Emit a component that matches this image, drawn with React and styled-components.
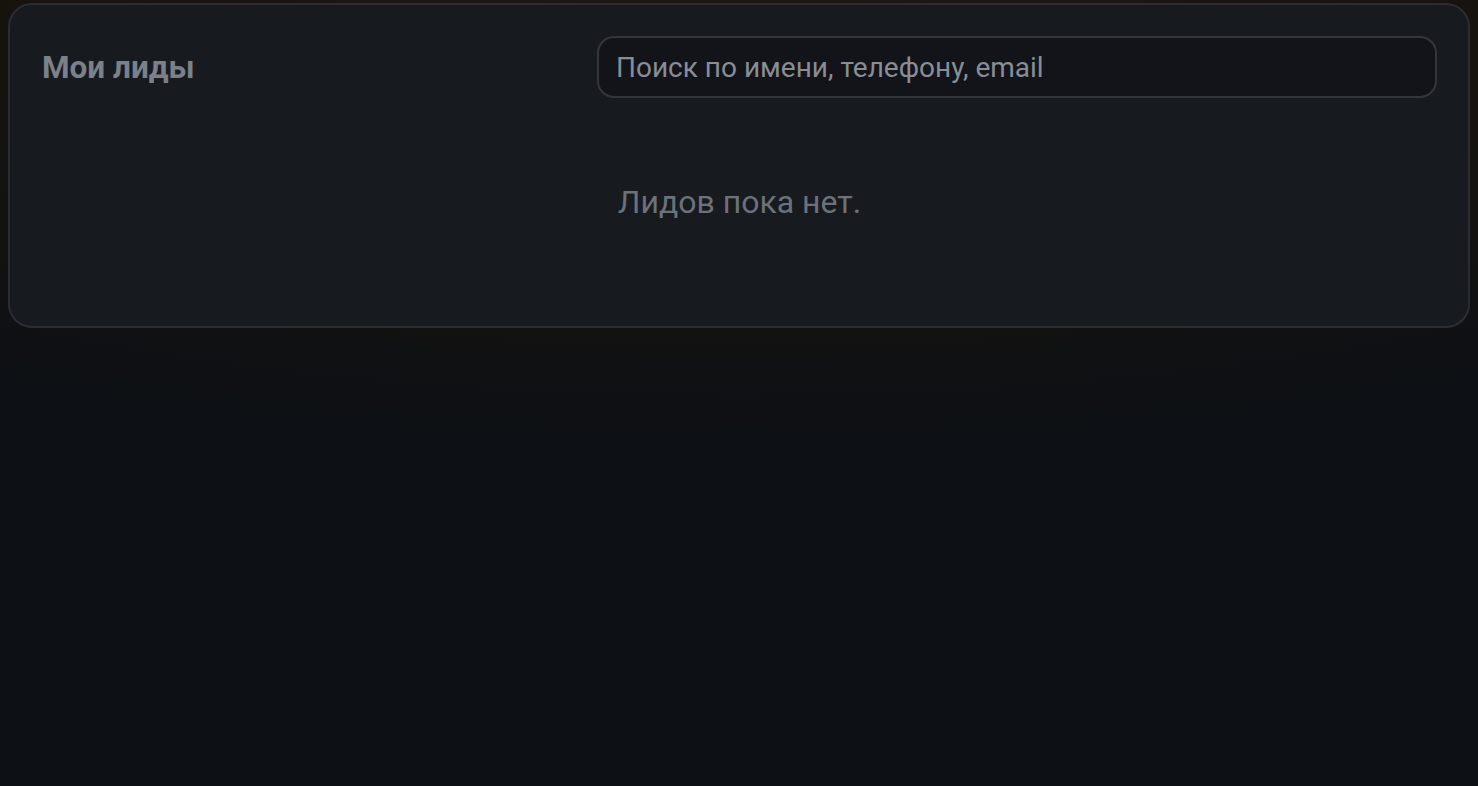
import React from 'react';
import styled, { createGlobalStyle } from 'styled-components';

const GlobalStyle = createGlobalStyle`
  html, body {
    margin: 0;
    padding: 0;
    min-height: 100%;
  }
  body {
    font-family: Roboto, "Noto Sans", "Liberation Sans", sans-serif;
    background: #0d1014;
    min-height: 786px;
    background-image: radial-gradient(ellipse 120% 70% at 50% 0%, #1e1811 0%, #16130f 45%, #0d1014 80%);
    background-repeat: no-repeat;
  }
`;

const Page = styled.div`
  padding: 3px 8px;
`;

const Card = styled.section`
  background: #171a1f;
  border: 2px solid #2a2d34;
  border-radius: 24px;
  padding: 31px 31px 32px 32px;
`;

const Header = styled.div`
  display: flex;
  align-items: center;
  justify-content: space-between;
  gap: 24px;
`;

const Title = styled.h2`
  margin: 0;
  font-size: 31.5px;
  font-weight: 700;
  color: #7b8089;
  letter-spacing: 0;
`;

const Search = styled.input`
  box-sizing: border-box;
  width: 840px;
  height: 62px;
  padding: 0 17px;
  background: #121419;
  border: 2px solid #33363d;
  border-radius: 17px;
  font-family: inherit;
  font-size: 28px;
  color: #c9ccd2;
  outline: none;
  &::placeholder {
    color: #888d96;
  }
`;

const Empty = styled.p`
  margin: 0;
  padding: 86px 0 74px;
  text-align: center;
  font-size: 32px;
  line-height: 36px;
  color: #6c717a;
`;

export default function App() {
  return (
    <>
      <GlobalStyle />
      <Page>
        <Card>
          <Header>
            <Title>Мои лиды</Title>
            <Search placeholder="Поиск по имени, телефону, email" />
          </Header>
          <Empty>Лидов пока нет.</Empty>
        </Card>
      </Page>
    </>
  );
}
